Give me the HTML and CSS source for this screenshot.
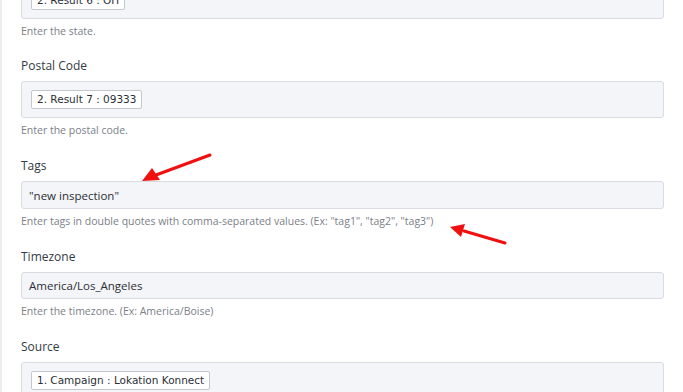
FILE: index.html
```html
<!DOCTYPE html>
<html>
<head>
<meta charset="utf-8">
<link rel="stylesheet" href="styles.css">
</head>
<body>
<div class="page">
  <div class="form">
    <div class="field first">
      <div class="box tall"><span class="token">2. Result 6 : OH</span></div>
      <div class="help">Enter the state.</div>
    </div>
    <div class="field">
      <div class="label">Postal Code</div>
      <div class="box tall"><span class="token">2. Result 7 : 09333</span></div>
      <div class="help">Enter the postal code.</div>
    </div>
    <div class="field">
      <div class="label">Tags</div>
      <div class="box input">"new inspection"</div>
      <div class="help">Enter tags in double quotes with comma-separated values. (Ex: "tag1", "tag2", "tag3")</div>
    </div>
    <div class="field">
      <div class="label">Timezone</div>
      <div class="box input short">America/Los_Angeles</div>
      <div class="help">Enter the timezone. (Ex: America/Boise)</div>
    </div>
    <div class="field">
      <div class="label">Source</div>
      <div class="box tall"><span class="token">1. Campaign : Lokation Konnect</span></div>
    </div>
  </div>
  <svg class="arrows" width="683" height="392" viewBox="0 0 683 392">
    <line x1="210" y1="155" x2="156" y2="175" stroke="#f01010" stroke-width="3" stroke-linecap="round"/>
    <polygon points="142,181 152,168 160,180" fill="#f01010"/>
    <line x1="505" y1="243" x2="464" y2="231" stroke="#f01010" stroke-width="3" stroke-linecap="round"/>
    <polygon points="450,227 465,224 461,237" fill="#f01010"/>
  </svg>
</div>
</body>
</html>
```

FILE: styles.css
```css
html, body {
  margin: 0;
  padding: 0;
  background: #ffffff;
  overflow: hidden;
}
.page {
  position: relative;
  width: 683px;
  height: 392px;
  overflow: hidden;
  border-left: 2px solid #eceef1;
  box-sizing: border-box;
}
.form {
  padding-left: 19px;
  width: 643px;
  margin-top: -19px;
  font-family: "Open Sans", "Segoe UI", sans-serif;
}
.field {
  margin-bottom: 19px;
}
.field.first {
  margin-bottom: 18px;
}
.field.first .box.tall {
  height: 38px;
  padding-top: 1px;
}
.label {
  font-size: 12px;
  line-height: 18px;
  color: #333a44;
  margin-bottom: 6px;
}
.box {
  box-sizing: border-box;
  background: #f3f5f8;
  border: 1px solid #d9dde3;
  border-radius: 3px;
  width: 643px;
}
.box.tall {
  height: 37px;
  padding: 0 9px;
  display: flex;
  align-items: center;
}
.box.input {
  height: 28px;
  padding: 0 7px;
  display: flex;
  align-items: center;
  font-size: 11.5px;
  color: #2b2f36;
}
.box.input.short {
  height: 27px;
}
.token {
  display: inline-block;
  background: #ffffff;
  border: 1px solid #c4c8ce;
  border-radius: 2px;
  height: 19px;
  box-sizing: border-box;
  line-height: 17px;
  padding: 0 5px;
  font-family: "DejaVu Sans", sans-serif;
  font-size: 10.5px;
  color: #2b2f36;
}
.help {
  margin-top: 4px;
  font-size: 10.5px;
  line-height: 16px;
  color: #7b8088;
}
.arrows {
  position: absolute;
  left: -2px;
  top: 0;
  pointer-events: none;
}
```
